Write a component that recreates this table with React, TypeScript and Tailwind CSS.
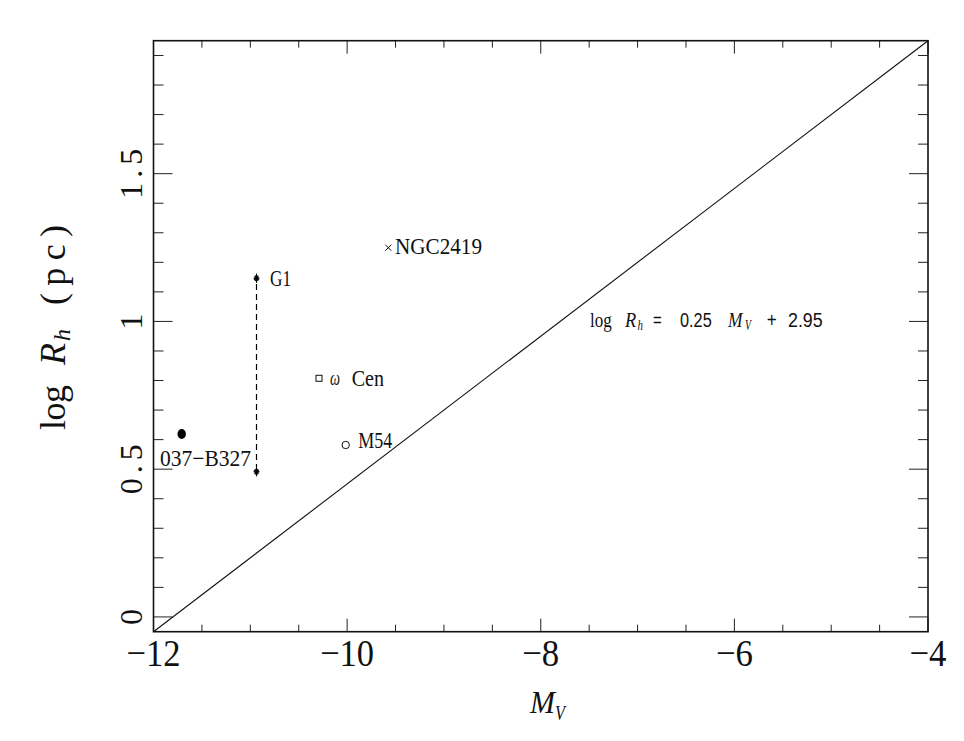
import React from 'react';

// plot frame in page pixels
const X0 = 153.5;
const X1 = 928;
const Y0 = 40.7;
const Y1 = 631.7;

const px = (mv: number) => X0 + ((mv + 12) * (X1 - X0)) / 8;
const py = (r: number) => Y1 - ((r + 0.05) * (Y1 - Y0)) / 2;

const serif = '"Liberation Serif", "DejaVu Serif", serif';
const sans = '"Liberation Sans", Arial, sans-serif';

const xTicks = Array.from({ length: 17 }, (_, i) => -12 + i * 0.5);
const yTicks = Array.from({ length: 20 }, (_, i) => Math.round(i * 10) / 100);

const Asterisk = ({ x, y }: { x: number; y: number }) => (
  <g stroke="#000" strokeWidth={1.1}>
    <line x1={x} y1={y - 4.6} x2={x} y2={y + 4.6} />
    {[0, 35, -35, 65, -65].map((a) => {
      const r = 3;
      const dx = Math.cos((a * Math.PI) / 180) * r;
      const dy = Math.sin((a * Math.PI) / 180) * r;
      return <line key={a} x1={x - dx} y1={y - dy} x2={x + dx} y2={y + dy} />;
    })}
  </g>
);

const Label = ({
  x,
  y,
  w,
  size = 23,
  italic = false,
  font = serif,
  anchor = 'start',
  spread = false,
  children,
}: {
  x: number;
  y: number;
  w?: number;
  size?: number;
  italic?: boolean;
  font?: string;
  anchor?: 'start' | 'middle' | 'end';
  spread?: boolean;
  children: React.ReactNode;
}) => (
  <text
    x={x}
    y={y}
    fontFamily={font}
    fontSize={size}
    fontStyle={italic ? 'italic' : 'normal'}
    textAnchor={anchor}
    fill="#111"
    {...(w ? { textLength: w, lengthAdjust: spread ? 'spacing' : 'spacingAndGlyphs' } : {})}
  >
    {children}
  </text>
);

const SizeRadiusPlot = () => {
  return (
    <svg width={964} height={741} viewBox="0 0 964 741" className="block">
      <rect x={0} y={0} width={964} height={741} fill="#fff" />

      {/* x ticks, bottom and top */}
      {xTicks.map((v) => {
        const major = Math.abs(v % 2) < 1e-6;
        const len = major ? 13 : 7;
        const x = px(v);
        return (
          <g key={v} stroke="#222" strokeWidth={1}>
            <line x1={x} y1={Y1} x2={x} y2={Y1 - len} />
            <line x1={x} y1={Y0} x2={x} y2={Y0 + len} />
          </g>
        );
      })}

      {/* y ticks, left and right */}
      {yTicks.map((v) => {
        const major = Math.abs((v * 10) % 5) < 1e-6;
        const len = major ? 19 : 10;
        const y = py(v);
        return (
          <g key={v} stroke="#222" strokeWidth={1}>
            <line x1={X0} y1={y} x2={X0 + len} y2={y} />
            <line x1={X1} y1={y} x2={X1 - len} y2={y} />
          </g>
        );
      })}

      {/* frame */}
      <rect x={X0} y={Y0} width={X1 - X0} height={Y1 - Y0} fill="none" stroke="#111" strokeWidth={1.6} />

      {/* relation log Rh = 0.25 Mv + 2.95 */}
      <line x1={px(-12)} y1={py(-0.05)} x2={px(-4)} y2={py(1.95)} stroke="#111" strokeWidth={1.1} />

      {/* x tick labels */}
      {[-12, -10, -8, -6, -4].map((v) => (
        <Label key={v} x={px(v)} y={666} size={38} anchor="middle" w={v <= -10 ? 54 : 37}>
          {`\u2212${Math.abs(v)}`}
        </Label>
      ))}

      {/* y tick labels, rotated */}
      {[
        { v: 0, t: '0', w: 0 },
        { v: 0.5, t: '0.5', w: 50 },
        { v: 1, t: '1', w: 0 },
        { v: 1.5, t: '1.5', w: 50 },
      ].map(({ v, t, w }) => (
        <g key={t} transform={`translate(141.7 ${py(v)}) rotate(-90)`}>
          <Label x={0} y={0} size={32} anchor="middle" w={w || undefined} spread>
            {t}
          </Label>
        </g>
      ))}

      {/* axis titles */}
      <Label x={530} y={713} size={32} italic w={25}>
        M
      </Label>
      <Label x={555} y={720} size={22} italic w={10}>
        V
      </Label>

      <g transform="translate(65 430) rotate(-90)">
        <Label x={0} y={0} size={36} w={45} spread>
          log
        </Label>
        <Label x={65} y={0} size={36} italic>
          R
        </Label>
        <Label x={89} y={5} size={24} italic>
          h
        </Label>
        <Label x={125} y={0} size={36} w={80} spread>
          (pc)
        </Label>
      </g>

      {/* G1 range */}
      <line x1={256.5} y1={284} x2={256.5} y2={467} stroke="#000" strokeWidth={1.2} strokeDasharray="6 4" />
      <Asterisk x={256.5} y={278.3} />
      <Asterisk x={256.5} y={471.7} />
      <Label x={270} y={286} w={21}>
        G1
      </Label>

      {/* 037-B327 */}
      <ellipse cx={181.7} cy={434} rx={4.2} ry={5} fill="#000" />
      <Label x={160} y={465.5} w={91}>
        {'037\u2212B327'}
      </Label>

      {/* NGC2419 */}
      <g stroke="#111" strokeWidth={1}>
        <line x1={385.3} y1={244.7} x2={391.3} y2={250.7} />
        <line x1={391.3} y1={244.7} x2={385.3} y2={250.7} />
      </g>
      <Label x={395} y={253.5} w={87}>
        NGC2419
      </Label>

      {/* omega Cen */}
      <rect x={316} y={375.3} width={6} height={6} fill="none" stroke="#111" strokeWidth={1} />
      <Label x={330} y={385} size={21} italic w={10}>
        ω
      </Label>
      <Label x={351.7} y={385.5} w={32.3}>
        Cen
      </Label>

      {/* M54 */}
      <circle cx={345.7} cy={445} r={3.7} fill="none" stroke="#111" strokeWidth={1} />
      <Label x={358.3} y={447.5} w={34}>
        M54
      </Label>

      {/* equation */}
      <Label x={590} y={326.7} size={21} w={21.7}>
        log
      </Label>
      <Label x={625} y={326.7} size={21} italic w={11.2}>
        R
      </Label>
      <Label x={637.5} y={330} size={14} italic w={5.5}>
        h
      </Label>
      <Label x={653} y={326.7} font={sans} size={20} w={8.7}>
        =
      </Label>
      <Label x={680} y={326.7} font={sans} size={20} w={31.7}>
        0.25
      </Label>
      <Label x={728} y={326.7} size={21} italic w={14.5}>
        M
      </Label>
      <Label x={745} y={330} size={14} italic w={6}>
        V
      </Label>
      <Label x={766.7} y={326.7} font={sans} size={20} w={10}>
        +
      </Label>
      <Label x={788} y={326.7} font={sans} size={20} w={34.7}>
        2.95
      </Label>
    </svg>
  );
};

export default function App() {
  return (
    <div className="w-[964px] h-[741px] bg-white overflow-hidden">
      <SizeRadiusPlot />
    </div>
  );
}
